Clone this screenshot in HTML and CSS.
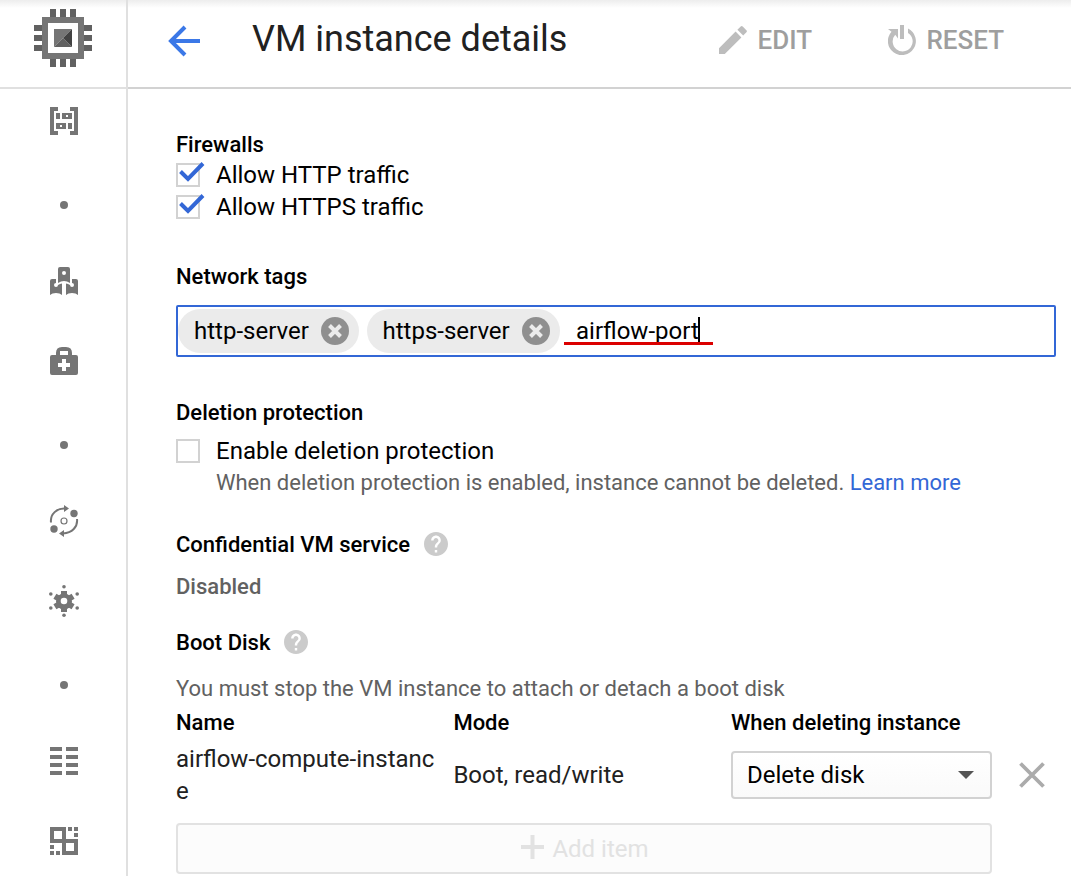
FILE: index.html
```html
<!DOCTYPE html>
<html lang="en">
<head>
<meta charset="utf-8">
<title>VM instance details</title>
<link rel="stylesheet" href="styles.css">
</head>
<body>
<div class="app">
  <aside class="sidebar">
    <div class="product">
      <svg width="58" height="58" viewBox="0 0 58 58">
        <path fill="#616161" d="M16 0h6v8h-6zM26 0h6v8h-6zM36 0h6v8h-6zM16 50h6v8h-6zM26 50h6v8h-6zM36 50h6v8h-6zM0 16h8v6H0zM0 26h8v6H0zM0 36h8v6H0zM50 16h8v6h-8zM50 26h8v6h-8zM50 36h8v6h-8z"/>
        <path fill="#757575" fill-rule="evenodd" d="M8 8h42v42H8zM14 14v30h30V14z"/>
        <path fill="#757575" d="M20 20h18L20 38z"/>
        <path fill="#616161" d="M20 38L29 29l9 9z"/>
        <path fill="#424242" d="M38 20v18l-9-9z"/>
      </svg>
    </div>
    <nav class="nav">
      <svg class="nav-icon" viewBox="0 0 32 32"><path fill-rule="evenodd" d="M2 2h8v4H6v20h4v4H2zM30 2h-8v4h4v20h-4v4h8zM8 8h4v6H8zM14 8h10v6H14zM18 10v2h2v-2zM8 18h10v6H8zM12 20v2h2v-2zM20 18h4v6h-4z"/></svg>
      <svg class="nav-icon" viewBox="0 0 32 32"><circle cx="16" cy="20" r="4"/></svg>
      <svg class="nav-icon" viewBox="0 0 32 32"><path fill-rule="evenodd" d="M12 2h8q2 0 2 2v14q-3-2-6-2t-6 2V4q0-2 2-2zM16 6a2 2 0 1 0 0 4a2 2 0 0 0 0-4z"/><path d="M4 14h4v4a2 2 0 1 0 2 2q2-1.500 4-1.500V30q-2-2-6-2t-6 2V16q0-2 2-2zM28 14h-4v4a2 2 0 1 1-2 2q-2-1.500-4-1.500V30q2-2 6-2t6 2V16q0-2-2-2z"/></svg>
      <svg class="nav-icon" viewBox="0 0 32 32"><path fill-rule="evenodd" d="M8 10V8q0-6 6-6h4q6 0 6 6v2h4q2 0 2 2v16q0 2-2 2H4q-2 0-2-2V12q0-2 2-2zM12 10h8V6h-8zM14 14v4h-4v4h4v4h4v-4h4v-4h-4v-4z"/></svg>
      <svg class="nav-icon" viewBox="0 0 32 32"><circle cx="16" cy="20" r="4"/></svg>
      <svg class="nav-icon" viewBox="0 0 32 32"><path class="stroke" d="M3 17.500C2 9 9 3 17 3.500M29 14C30 22 24 28 15 28.500"/><circle class="ring" cx="16" cy="16" r="3"/><path d="M16 0l5 3.500-5 3.500zM16 25v7l-5-3.500z"/><circle cx="26" cy="8.500" r="3.700"/><circle cx="6" cy="24" r="3.700"/></svg>
      <svg class="nav-icon" viewBox="0 0 32 32"><circle cx="16" cy="16.500" r="8"/><g id="teeth"><path d="M13 6h6v21h-6z"/><path d="M13 6h6v21h-6z" transform="rotate(60 16 16.500)"/><path d="M13 6h6v21h-6z" transform="rotate(120 16 16.500)"/></g><circle cx="16" cy="16" r="3.300" fill="#fff"/><circle cx="16" cy="1.800" r="1.800"/><circle cx="16" cy="30.200" r="1.800"/><circle cx="2.800" cy="9" r="1.800"/><circle cx="29.200" cy="9" r="1.800"/><circle cx="2.800" cy="23" r="1.800"/><circle cx="29.200" cy="23" r="1.800"/></svg>
      <svg class="nav-icon" viewBox="0 0 32 32"><circle cx="16" cy="20" r="4"/></svg>
      <svg class="nav-icon" viewBox="0 0 32 32"><path d="M2 2h12v4H2zM18 2h12v4H18zM2 10h12v4H2zM18 10h12v4H18zM2 18h12v4H2zM18 18h12v4H18zM2 26h12v4H2zM18 26h12v4H18z"/></svg>
      <svg class="nav-icon" viewBox="0 0 32 32"><path fill-rule="evenodd" d="M2 2h16v12h12v16H14V18H2zM6 6v8h8V6zM18 18v8h8v-8zM20 2h4v4h-4zM26 2h4v4h-4zM26 8h4v4h-4zM2 20h4v4H2zM2 26h4v4H2zM8 26h4v4H8z"/></svg>
    </nav>
  </aside>

  <div class="page">
    <header class="toolbar">
      <svg class="back" width="32" height="32" viewBox="0 0 32 32"><path d="M32 16H3M17 2L3 16l14 14" fill="none" stroke="#3b78e7" stroke-width="4"/></svg>
      <h1 class="title">VM instance details</h1>
      <button class="action edit">
        <svg width="28" height="28" viewBox="0 0 28 28"><path d="M0 22.300L16.600 5.600l5.800 5.800L5.800 28H0zM18.400 3.800L21.700.6q1-1 2 0l3.700 3.700q1 1 0 2l-3.200 3.300z"/></svg>
        <span>EDIT</span>
      </button>
      <button class="action reset">
        <svg width="28" height="30" viewBox="0 0 28 30"><path d="M12 0h4v14h-4zM0 4h10v9.500L7.200 9.800A10 10 0 1 0 20 8V3.500A14 14 0 1 1 3.500 6.700z"/></svg>
        <span>RESET</span>
      </button>
    </header>

    <main class="content">
      <section class="firewalls">
        <h2 class="heading">Firewalls</h2>
        <label class="check-row"><span class="box"><svg class="tick" width="26" height="20" viewBox="0 0 26 20"><path d="M1.500 9.500l7.500 7.500L24 1.500"/></svg></span><span>Allow HTTP traffic</span></label>
        <label class="check-row"><span class="box"><svg class="tick" width="26" height="20" viewBox="0 0 26 20"><path d="M1.500 9.500l7.500 7.500L24 1.500"/></svg></span><span>Allow HTTPS traffic</span></label>
      </section>

      <section class="tags">
        <h2 class="heading">Network tags</h2>
        <div class="tag-input">
          <span class="chip"><span>http-server</span><svg width="28" height="28" viewBox="0 0 28 28"><circle cx="14" cy="14" r="14" fill="#8f8f8f"/><path d="M8.500 8.500l11 11M19.500 8.500l-11 11" stroke="#ebebeb" stroke-width="4"/></svg></span>
          <span class="chip"><span>https-server</span><svg width="28" height="28" viewBox="0 0 28 28"><circle cx="14" cy="14" r="14" fill="#8f8f8f"/><path d="M8.500 8.500l11 11M19.500 8.500l-11 11" stroke="#ebebeb" stroke-width="4"/></svg></span>
          <span class="typing"><span>airflow-port</span><span class="caret"></span><span class="underline"></span></span>
        </div>
      </section>

      <section class="deletion">
        <h2 class="heading">Deletion protection</h2>
        <label class="check-row"><span class="box"></span><span>Enable deletion protection</span></label>
        <p class="hint">When deletion protection is enabled, instance cannot be deleted. <a class="link">Learn more</a></p>
      </section>

      <section class="confidential">
        <h2 class="heading">Confidential VM service <svg class="help" width="24" height="24" viewBox="2 2 20 20"><path d="M12 2C6.480 2 2 6.480 2 12s4.480 10 10 10 10-4.480 10-10S17.520 2 12 2zm1 17h-2v-2h2v2zm2.070-7.750l-.9.920C13.450 12.900 13 13.500 13 15h-2v-.5c0-1.100.45-2.100 1.170-2.830l1.240-1.260c.37-.36.59-.86.59-1.410 0-1.100-.9-2-2-2s-2 .9-2 2H8c0-2.210 1.790-4 4-4s4 1.790 4 4c0 .88-.36 1.680-.93 2.250z"/></svg></h2>
        <p class="status">Disabled</p>
      </section>

      <section class="boot">
        <h2 class="heading">Boot Disk <svg class="help" width="24" height="24" viewBox="2 2 20 20"><path d="M12 2C6.480 2 2 6.480 2 12s4.480 10 10 10 10-4.480 10-10S17.520 2 12 2zm1 17h-2v-2h2v2zm2.070-7.750l-.9.920C13.450 12.900 13 13.500 13 15h-2v-.5c0-1.100.45-2.100 1.170-2.830l1.240-1.260c.37-.36.59-.86.59-1.410 0-1.100-.9-2-2-2s-2 .9-2 2H8c0-2.210 1.790-4 4-4s4 1.790 4 4c0 .88-.36 1.680-.93 2.250z"/></svg></h2>
        <p class="note">You must stop the VM instance to attach or detach a boot disk</p>
        <div class="disk-grid disk-head"><span>Name</span><span>Mode</span><span>When deleting instance</span></div>
        <div class="disk-grid disk-row">
          <span class="disk-name">airflow-compute-instance</span>
          <span class="mode">Boot, read/write</span>
          <div class="select"><span>Delete disk</span><svg width="16" height="8" viewBox="0 0 16 8"><path d="M0 0h16L8 8z" fill="#555"/></svg></div>
          <svg class="remove" width="26" height="26" viewBox="0 0 26 26"><path d="M1.500 1.500l23 23M24.500 1.500l-23 23" stroke="#ababab" stroke-width="3.800"/></svg>
        </div>
        <button class="add"><svg class="plus" width="23" height="24" viewBox="0 0 23 24"><path d="M9.500 0h4v10H23v4h-9.500v10h-4V14H0v-4h9.500z" fill="#e2e2e2"/></svg><span>Add item</span></button>
      </section>
    </main>
  </div>
</div>
</body>
</html>
```
FILE: styles.css
```css
* { box-sizing: border-box; }
html, body { height: 100%; }
body {
  margin: 0;
  overflow: hidden;
  background: #fff;
  color: #000;
  font: 24px/32px Roboto, sans-serif;
}
h1, h2, p { margin: 0; }
button { border: 0; background: none; padding: 0; font: inherit; }
svg { display: block; flex: none; }

.app {
  display: flex;
  height: 876px;
  background: linear-gradient(#ededed, #fff 8px);
}

.sidebar { width: 128px; flex: none; border-right: 2px solid #e0e0e0; }
.product {
  height: 89px;
  padding: 9px 0 0 34px;
  border-bottom: 2px solid #e0e0e0;
}
.nav {
  display: flex;
  flex-direction: column;
  gap: 48px;
  padding: 16px 0 0 48px;
}
.nav-icon { width: 32px; height: 32px; fill: #757575; overflow: visible; }
.nav-icon .stroke { fill: none; stroke: #757575; stroke-width: 2; }
.nav-icon .ring { fill: none; stroke: #757575; stroke-width: 1.2; }

.page { flex: 1; min-width: 0; }
.toolbar {
  display: flex;
  align-items: center;
  height: 89px;
  padding: 0 0 7px 40px;
  border-bottom: 2px solid #d2d2d2;
}
.back { margin-top: 2px; }
.title {
  width: 467px;
  margin: -2px 0 0 52px;
  font-size: 36px;
  font-weight: 400;
  line-height: 44px;
  color: #212121;
  white-space: nowrap;
}
.action {
  display: flex;
  align-items: center;
  gap: 10.5px;
  font-size: 26px;
  font-weight: 500;
  color: #9e9e9e;
}
.action svg { fill: #bdbdbd; }
.edit { width: 169px; }

.content { width: 928px; padding: 41px 0 0 48px; }
.heading {
  display: flex;
  align-items: center;
  font-size: 22px;
  font-weight: 500;
  line-height: 30px;
}
.firewalls .heading { line-height: 29px; }
.check-row { display: flex; align-items: center; gap: 16px; }
.box {
  position: relative;
  width: 24px;
  height: 24px;
  border: 2px solid #d2d2d2;
}
.tick { position: absolute; left: 1px; top: -3px; }
.tick path { fill: none; stroke: #3367d6; stroke-width: 4; }

.tags { margin-top: 39px; }
.tag-input {
  display: flex;
  align-items: center;
  gap: 8px;
  width: 880px;
  height: 52px;
  margin-top: 13px;
  border: 2px solid #3367d6;
  border-radius: 2px;
}
.chip {
  display: flex;
  align-items: center;
  justify-content: space-between;
  height: 44px;
  width: 181px;
  padding: 0 10px 0 16px;
  border-radius: 22px;
  background: #ebebeb;
}
.chip + .chip { width: 193px; padding-left: 15.5px; }
.typing { position: relative; display: flex; margin-left: 8px; }
.caret { position: absolute; left: 122px; top: 2px; width: 2px; height: 25px; background: #000; }
.underline { position: absolute; left: -12px; top: 27px; width: 149px; height: 3px; background: #db0000; }

.deletion { margin-top: 41px; }
.deletion .check-row { margin-top: 7px; }
.hint { padding-left: 40px; font-size: 22px; letter-spacing: -0.01px; color: #616161; white-space: nowrap; }
.link { color: #3367d6; }

.confidential { margin-top: 31px; }
.help { margin: -2px 0 0 14px; fill: #cbcbcb; }
.status {
  margin-top: 12px;
  font-size: 22px;
  font-weight: 500;
  line-height: 30px;
  color: #616161;
}

.boot { margin-top: 26px; }
.note { margin-top: 16px; font-size: 22px; line-height: 30px; color: #616161; }
.disk-grid {
  display: grid;
  grid-template-columns: 277.4px 277.6px 261px 26px;
  align-items: center;
}
.disk-head {
  margin-top: 4px;
  font-size: 22px;
  font-weight: 500;
  line-height: 30px;
}
.disk-row { margin-top: 5px; color: #212121; }
.disk-name { width: 261px; overflow-wrap: anywhere; word-break: break-all; }
.select {
  display: flex;
  align-items: center;
  justify-content: space-between;
  height: 48px;
  padding: 0 16px 0 14px;
  border: 2px solid #d2d2d2;
  border-radius: 4px;
  background: linear-gradient(#fff, #fafafa);
  color: #000;
}
.remove { margin-left: 27px; }
.add {
  display: flex;
  align-items: center;
  justify-content: center;
  gap: 8px;
  width: 816px;
  height: 51px;
  margin-top: 16px;
  padding-left: 2px;
  border: 2px solid #e2e2e2;
  border-radius: 4px;
  background: #fcfcfc;
  color: #e2e2e2;
}
.plus { margin-top: -3px; }
```
